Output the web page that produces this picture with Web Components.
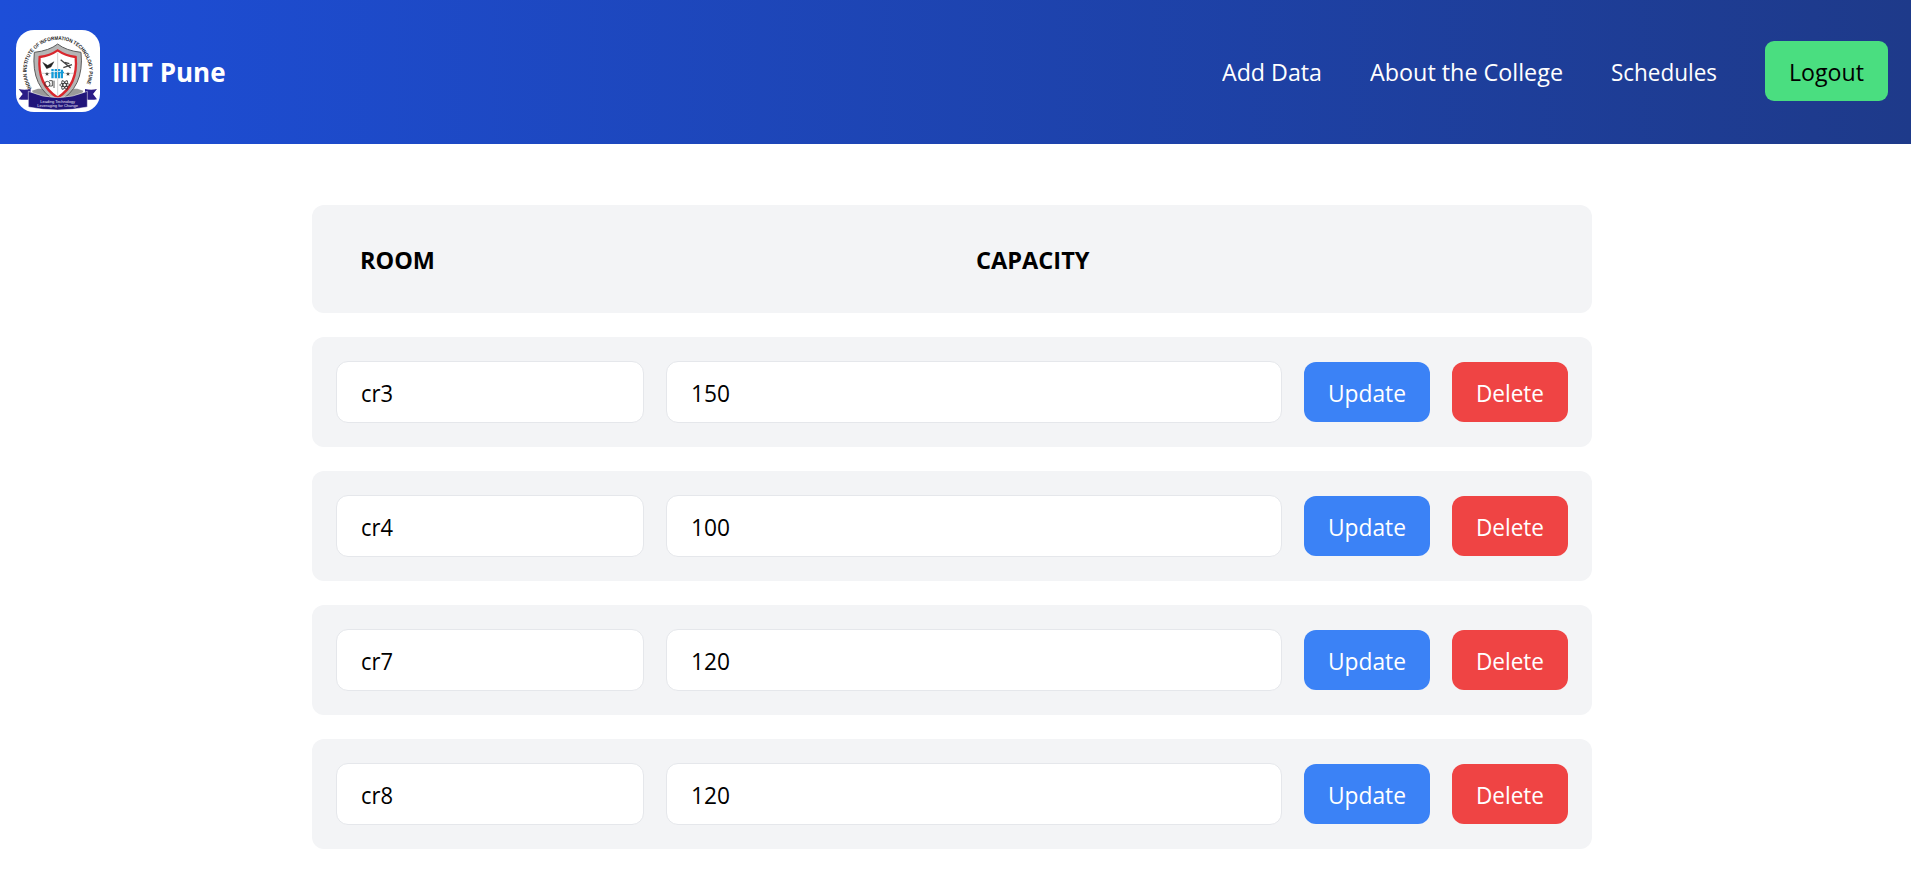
<!DOCTYPE html>
<html lang="en">
<head>
<meta charset="utf-8">
<title>IIIT Pune</title>
<style>
html{font-size:24px}
body{margin:0;background:#fff;color:#000;font-family:"Open Sans","Noto Sans",sans-serif;line-height:36px}
</style>
</head>
<body>
<app-page></app-page>
<script>
const define = (name, html, setup) => customElements.define(name, class extends HTMLElement {
  connectedCallback() {
    if (this.shadowRoot) return;
    const t = document.createElement('template');
    t.innerHTML = html;
    this.attachShadow({ mode: 'open' }).append(t.content.cloneNode(true));
    if (setup) setup.call(this, this.shadowRoot);
  }
});

/* Text condensed so that its advance equals the "w" attribute. */
define('fit-text', `<style>:host{display:block;height:36px;white-space:nowrap;padding-top:1px;margin-bottom:-1px}span{display:inline-block;transform-origin:0 50%}</style><span><slot></slot></span>`, function (root) {
  const span = root.querySelector('span'), want = parseFloat(this.getAttribute('w'));
  const natural = span.getBoundingClientRect().width;
  this.style.width = want + 'px';
  span.style.transform = `scaleX(${(want / natural).toFixed(4)})`;
});

define('college-logo', `<style>
:host{display:block;width:84px;height:82px;border-radius:18px;overflow:hidden;background:#fff}
svg{display:block;font-family:"Liberation Sans",Arial,sans-serif}
</style>
<svg width="84" height="82" viewBox="0 0 252 246">
<defs><path id="ring" d="M47 175A94 94 0 1 1 204 175"/></defs>
<text font-size="15.5" font-weight="700" fill="#1c1c1c"><textPath href="#ring" textLength="388" lengthAdjust="spacingAndGlyphs">INDIAN INSTITUTE OF INFORMATION TECHNOLOGY PUNE</textPath></text>
<path d="M48 182L66 176H184L202 182L192 208H58Z" fill="#999"/>
<path d="M125 42Q150 62 195 67Q206 174 125 216Q44 174 55 67Q100 62 125 42Z" fill="#b5b5b5" stroke="#5c5c5c" stroke-width="3"/>
<path d="M125 61Q148 77 179 81Q187 164 125 203Q63 164 71 81Q102 77 125 61Z" fill="#fff" stroke="#d9272e" stroke-width="7"/>
<path d="M125 68V198M76 130H174" stroke="#bbb" stroke-width="2"/>
<path d="M80 97L95 106L114 95L105 111L92 116Z" fill="#222" stroke="#222"/>
<path d="M134 89L164 114M142 113L168 104M146 97l14 4" stroke="#444" stroke-width="4"/>
<g fill="none" stroke="#333" stroke-width="2.5"><circle cx="94" cy="162" r="8"/><path d="M100 152h9v16h-9M114 152v22"/><ellipse cx="146" cy="165" rx="15" ry="5"/><ellipse cx="146" cy="165" rx="15" ry="5" transform="rotate(60 146 165)"/><ellipse cx="146" cy="165" rx="15" ry="5" transform="rotate(-60 146 165)"/></g>
<path d="M106 125h7v20h-7zM116 125h7v20h-7zM126 125h7v20h-7zM135 119h6v26h-6zM133 125h11v4h-11zM106 117h7v6h-7zM116 117h7v6h-7zM126 117h7v6h-7z" fill="#159bd8"/>
<path d="M93 126l2 4h4l-3 3 1 4-4-2-4 2 1-4-3-3h4zM156 126l2 4h4l-3 3 1 4-4-2-4 2 1-4-3-3h4z" fill="#444"/>
<path d="M8 177Q25 181 44 177V208Q24 211 8 208L20 192ZM243 177Q226 181 207 177V208Q227 211 243 208L231 192Z" fill="#2b1c86"/>
<path d="M37 184Q125 222 214 184V231Q125 249 37 231Z" fill="#21157a" stroke="#fff" stroke-width="1.5"/>
<text x="125" y="220" font-size="12" fill="#e4e2f2" text-anchor="middle" textLength="104">Leading Technology</text>
<text x="125" y="231" font-size="12" fill="#e4e2f2" text-anchor="middle" textLength="122">Leveraging for Change</text>
</svg>`);

define('app-header', `<style>
:host{display:flex;align-items:flex-start;justify-content:space-between;box-sizing:border-box;height:144px;padding:30px 23px 0 16px;color:#fff;background:linear-gradient(to right,#1d4ed8,#1e3a8a)}
.brand{display:flex;gap:12px}
h1{margin:23px 0 0;font-size:26px;line-height:36px;font-weight:700}
nav{display:flex;gap:48px;align-items:center;margin-top:11px}
button{font:inherit;border:0;margin:0;padding:12px 24px;border-radius:9px;background:#4ade80;color:#000;display:block;text-align:left}
</style>
<div class="brand"><college-logo></college-logo><h1><fit-text w="113.5">IIIT Pune</fit-text></h1></div>
<nav><fit-text w="100">Add Data</fit-text><fit-text w="193">About the College</fit-text><fit-text w="106">Schedules</fit-text><button><fit-text w="75">Logout</fit-text></button></nav>`);

define('ui-card', `<style>:host{display:flex;box-sizing:border-box;padding:24px;gap:22px;align-items:center;border-radius:12px;background:#f3f4f6}</style><slot></slot>`);

define('ui-field', `<style>:host{display:block;box-sizing:border-box;height:62px;padding:12px 24px;border:1px solid #e5e7eb;border-radius:12px;background:#fff}</style><slot></slot>`);

define('ui-button', `<style>:host{display:block}button{display:block;font:inherit;color:#fff;border:0;margin:0;padding:12px 24px;border-radius:12px;background:var(--bg);text-align:left}</style><button><slot></slot></button>`);

define('rooms-list', `<style>
:host{display:flex;flex-direction:column;gap:24px;width:1280px;margin:61px 0 0 312px}
.head{height:108px;font-weight:700;gap:0}
.room{width:640px;padding-left:24px;box-sizing:border-box}
.rows{display:contents}
</style><ui-card class="head"><div class="room"><fit-text w="75">ROOM</fit-text></div><fit-text w="113.5">CAPACITY</fit-text></ui-card><div class="rows"></div>`, function (root) {
  for (const [n, c] of [['cr3', 150], ['cr4', 100], ['cr7', 120], ['cr8', 120]]) {
    const card = document.createElement('ui-card');
    card.innerHTML = `<ui-field style="flex:0 0 308px"><fit-text w="32">${n}</fit-text></ui-field><ui-field style="flex:1"><fit-text w="39">${c}</fit-text></ui-field><ui-button style="--bg:#3b82f6"><fit-text w="78">Update</fit-text></ui-button><ui-button style="--bg:#ef4444"><fit-text w="68">Delete</fit-text></ui-button>`;
    root.querySelector('.rows').append(card);
  }
});

define('app-page', `<style>:host{display:block}</style><app-header></app-header><rooms-list></rooms-list>`);
</script>
</body>
</html>
